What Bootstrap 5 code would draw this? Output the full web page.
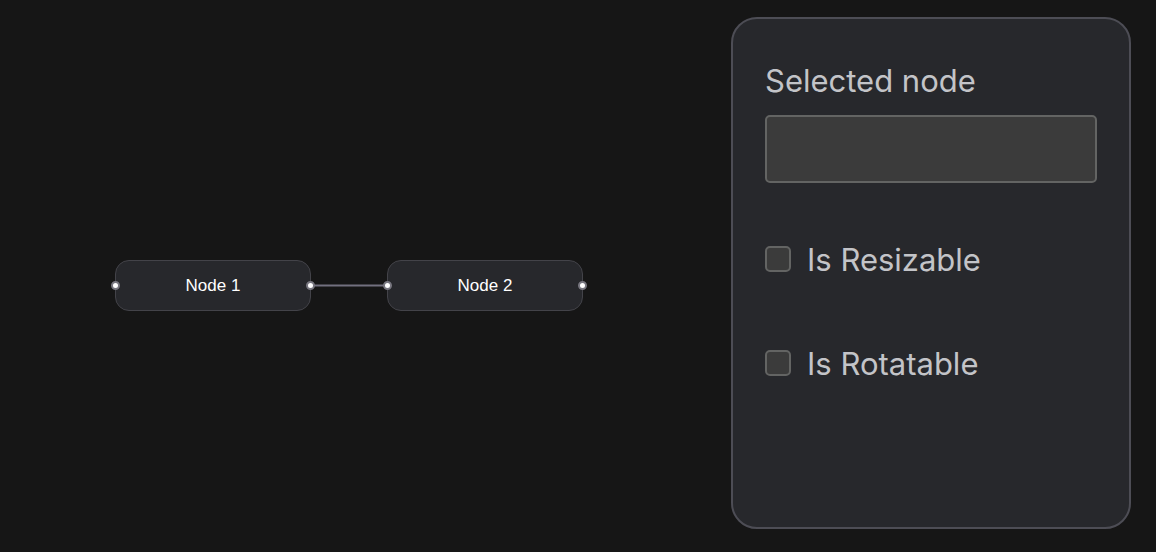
<!DOCTYPE html>
<html lang="en" data-bs-theme="dark">
<head>
<meta charset="utf-8">
<meta name="viewport" content="width=device-width, initial-scale=1">
<title>Node editor</title>
<link href="https://cdn.jsdelivr.net/npm/bootstrap@5.3.0/dist/css/bootstrap.min.css" rel="stylesheet">
<style>
  body { background: #161616; font-family: Inter, sans-serif; }
  .node-canvas { min-height: 528px; }
  .flow-node {
    position: absolute; top: 260px; width: 196px; height: 51px;
    background: #27282c; border: 1px solid #434349; border-radius: 14px;
    color: #fff; font: 17px/24px "Liberation Sans", sans-serif;
  }
  .node-first { left: 115px; }
  .node-second { left: 387px; }
  .flow-edge { position: absolute; left: 311px; top: 284px; width: 76px; height: 3px; }
  .port {
    position: absolute; top: 20px; width: 9px; height: 9px;
    background: #fff; border: 2px solid #77767f; border-radius: 50%;
  }
  .port-in { left: -5px; }
  .port-out { right: -5px; }
  .settings-panel {
    width: 400px; min-height: 512px; margin: 17px 25px 23px 0; padding: 38px 32px 32px;
    background: #27282c; border: 2px solid #4d4d55; border-radius: 26px;
    color: #c3c4c8; font-size: 31px; line-height: 48px;
  }
  .settings-panel .form-label { margin-bottom: 10px; }
  .settings-panel .form-control {
    height: 68px; background: #3b3b3b; border: 2px solid #636463; border-radius: 5px; font-size: 31px;
  }
  .option-list { margin-top: 51px; gap: 54px; }
  .option-row { gap: 16px; }
  .option-row label { padding-top: 2px; }
  .settings-panel .form-check-input {
    width: 26px; height: 26px; background-color: #3b3b3b; border: 2px solid #636463; border-radius: 5px;
  }
</style>
</head>
<body>
<div class="d-flex align-items-start min-vh-100">
  <main class="node-canvas position-relative flex-grow-1 align-self-stretch">
    <svg class="flow-edge" viewBox="0 0 76 3" aria-hidden="true"><path d="M0 1.5H76" stroke="#72707f" stroke-width="2"/></svg>
    <div class="flow-node node-first d-flex align-items-center justify-content-center">
      <span class="port port-in"></span>Node 1<span class="port port-out"></span>
    </div>
    <div class="flow-node node-second d-flex align-items-center justify-content-center">
      <span class="port port-in"></span>Node 2<span class="port port-out"></span>
    </div>
  </main>
  <aside class="settings-panel flex-shrink-0">
    <label class="form-label d-block" for="selectedNode">Selected node</label>
    <input class="form-control" type="text" id="selectedNode">
    <div class="option-list d-flex flex-column">
      <div class="option-row d-flex align-items-center">
        <input class="form-check-input m-0" type="checkbox" id="resizable">
        <label for="resizable">Is Resizable</label>
      </div>
      <div class="option-row d-flex align-items-center">
        <input class="form-check-input m-0" type="checkbox" id="rotatable">
        <label for="rotatable">Is Rotatable</label>
      </div>
    </div>
  </aside>
</div>
<script src="https://cdn.jsdelivr.net/npm/bootstrap@5.3.0/dist/js/bootstrap.bundle.min.js"></script>
</body>
</html>
